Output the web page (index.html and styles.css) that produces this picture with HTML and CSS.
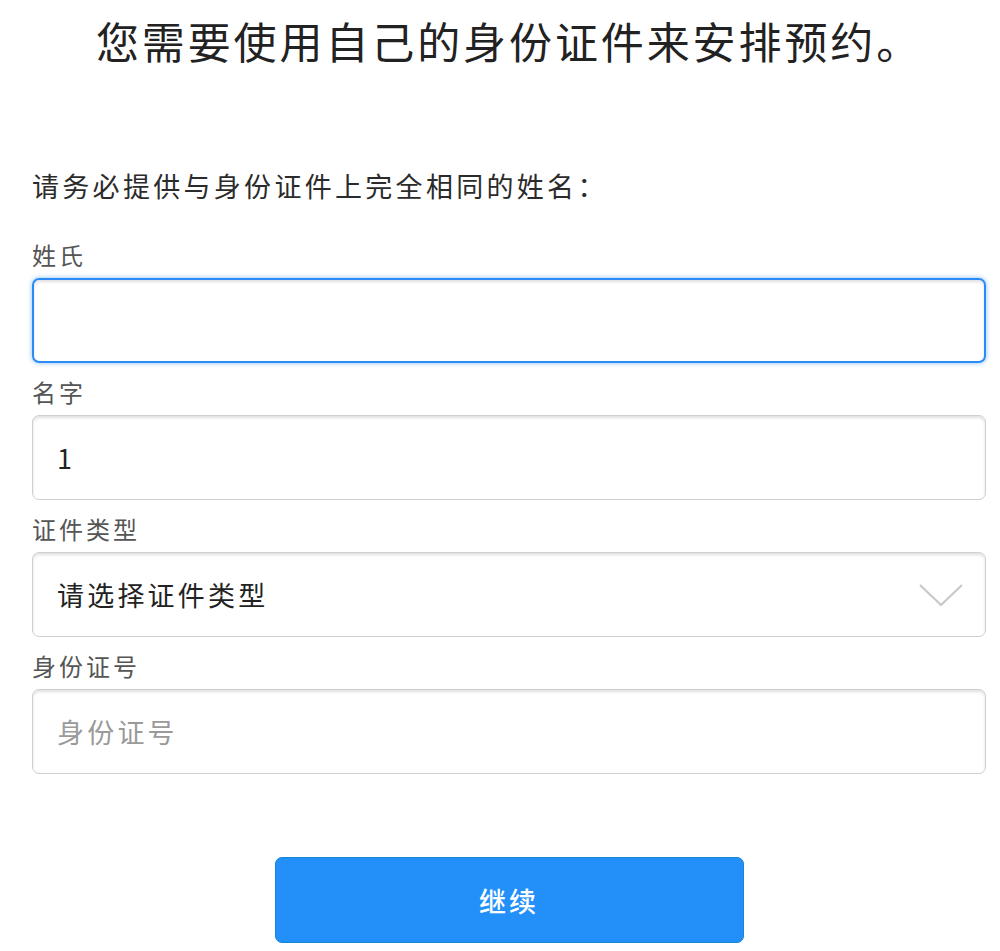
FILE: index.html
```html
<!DOCTYPE html>
<html lang="zh-CN">
<head>
<meta charset="utf-8">
<title>身份证件</title>
<link rel="stylesheet" href="styles.css">
</head>
<body>
<div class="page">
  <h1 class="title">您需要使用自己的身份证件来安排预约。</h1>
  <p class="intro">请务必提供与身份证件上完全相同的姓名：</p>
  <form class="form">
    <div class="field">
      <label class="label">姓氏</label>
      <div class="box box-focus"></div>
    </div>
    <div class="field">
      <label class="label">名字</label>
      <div class="box"><span class="value">1</span></div>
    </div>
    <div class="field">
      <label class="label">证件类型</label>
      <div class="box box-select">
        <span class="value">请选择证件类型</span>
        <svg class="chevron" width="44" height="24" viewBox="0 0 44 24"><polyline points="1,2 22,22 43,2" fill="none" stroke="#c9c9c9" stroke-width="2.2"/></svg>
      </div>
    </div>
    <div class="field">
      <label class="label">身份证号</label>
      <div class="box"><span class="placeholder">身份证号</span></div>
    </div>
    <div class="actions">
      <button type="button" class="btn">继续</button>
    </div>
  </form>
</div>
</body>
</html>
```
FILE: styles.css
```css
html, body {
  margin: 0;
  padding: 0;
  background: #ffffff;
}
body {
  font-family: "Noto Sans CJK SC", "Noto Sans", "Liberation Sans", sans-serif;
  color: #333;
}
.page {
  padding: 12px 14px 0 32px;
}
.title {
  margin: 0;
  font-size: 43px;
  font-weight: 400;
  line-height: 56px;
  letter-spacing: 2.9px;
  text-align: center;
  color: #222;
}
.intro {
  margin: 100px 0 0 0;
  font-size: 27px;
  line-height: 36px;
  letter-spacing: 3.3px;
  color: #2b2b2b;
}
.form {
  margin-top: 36px;
}
.field {
  margin-top: 14px;
}
.label {
  display: block;
  font-size: 24px;
  line-height: 30px;
  letter-spacing: 3px;
  color: #555;
}
.box {
  margin-top: 8px;
  height: 85px;
  box-sizing: border-box;
  border: 1.5px solid #cfcfcf;
  border-radius: 7px;
  box-shadow: inset 0 2px 3px rgba(0,0,0,0.12);
  display: flex;
  align-items: center;
  padding: 0 22px 0 24px;
  font-size: 27px;
  letter-spacing: 3.2px;
}
.box-focus {
  border: 2px solid #2a8bf5;
  box-shadow: inset 0 2px 3px rgba(0,0,0,0.12), 0 0 5px rgba(42,139,245,0.55);
}
.box-select {
  justify-content: space-between;
}
.value {
  color: #222;
}
.placeholder {
  color: #9a9a9a;
}
.chevron {
  display: block;
}
.actions {
  margin-top: 83px;
  display: flex;
  justify-content: center;
}
.btn {
  width: 469px;
  height: 86px;
  background: #2290f8;
  border: 1px solid #1687d6;
  border-radius: 7px;
  color: #fff;
  font-family: inherit;
  font-size: 27px;
  font-weight: 500;
  letter-spacing: 3px;
  padding: 0;
}
```
